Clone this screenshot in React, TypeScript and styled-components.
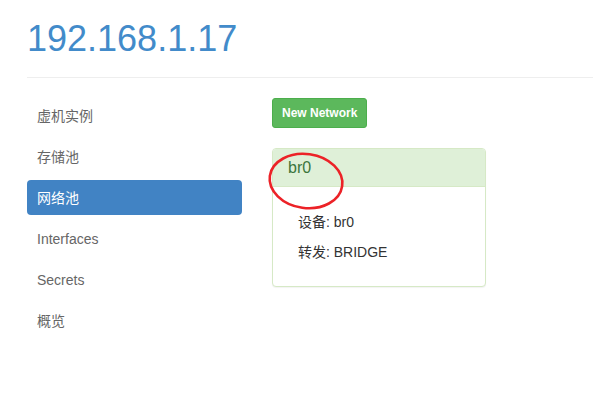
import React from "react";
import styled, { createGlobalStyle } from "styled-components";

type NavItem = {
  label: string;
  active?: boolean;
};

const navItems: NavItem[] = [
  { label: "虚机实例" },
  { label: "存储池" },
  { label: "网络池", active: true },
  { label: "Interfaces" },
  { label: "Secrets" },
  { label: "概览" },
];

const App = () => {
  return (
    <>
      <GlobalStyle />
      <Page>
        <Title>192.168.1.17</Title>
        <Divider />
        <Row>
          <Sidebar>
            {navItems.map((item) => (
              <NavLink key={item.label} active={!!item.active}>
                {item.label}
              </NavLink>
            ))}
          </Sidebar>
          <Main>
            <GreenButton>New Network</GreenButton>
            <Panel>
              <PanelHeading>
                <PanelTitle>br0</PanelTitle>
              </PanelHeading>
              <PanelBody>
                <InfoLine>设备: br0</InfoLine>
                <InfoLine>转发: BRIDGE</InfoLine>
              </PanelBody>
              {/* red annotation ring drawn over the heading */}
              <Marker width="80" height="64" viewBox="0 0 80 64">
                <ellipse
                  cx="40"
                  cy="32"
                  rx="36.5"
                  ry="27"
                  transform="rotate(8 40 32)"
                  fill="none"
                  stroke="#ec2227"
                  strokeWidth="2.6"
                />
              </Marker>
            </Panel>
          </Main>
        </Row>
      </Page>
    </>
  );
};

const GlobalStyle = createGlobalStyle`
  html, body {
    margin: 0;
    padding: 0;
    background: #fff;
    overflow: hidden;
  }
  body {
    font-family: "Liberation Sans", Arial, "Noto Sans CJK SC", sans-serif;
    font-size: 14px;
    color: #333;
  }
`;

const Page = styled.div`
  padding-left: 27px;
`;

const Title = styled.h1`
  margin: 0;
  padding-top: 19px;
  font-size: 36px;
  font-weight: 400;
  line-height: 40px;
  color: #428bca;
`;

const Divider = styled.hr`
  margin: 18px 0 20px;
  border: 0;
  border-top: 1px solid #eee;
`;

const Row = styled.div`
  display: flex;
  gap: 30px;
`;

const Sidebar = styled.ul`
  list-style: none;
  margin: 0;
  padding: 0;
  width: 215px;
  display: flex;
  flex-direction: column;
  gap: 6px;
`;

const NavLink = styled.li<{ active: boolean }>`
  height: 35px;
  line-height: 36px;
  padding: 0 10px;
  border-radius: 4px;
  font-size: 14px;
  color: ${(p) => (p.active ? "#fff" : "#666")};
  background: ${(p) => (p.active ? "#4183c4" : "transparent")};
`;

const Main = styled.div`
  width: 214px;
  display: flex;
  flex-direction: column;
  align-items: flex-start;
  gap: 20px;
`;

const GreenButton = styled.button`
  height: 30px;
  padding: 0 9px;
  border: 1px solid #4cae4c;
  border-radius: 3px;
  background: #5cb85c;
  color: #fff;
  font-family: "Liberation Sans", Arial, sans-serif;
  font-size: 12px;
  font-weight: 700;
`;

const Panel = styled.div`
  position: relative;
  width: 214px;
  box-sizing: border-box;
  border: 1px solid #d6e9c6;
  border-radius: 4px;
  background: #fff;
  box-shadow: 0 1px 1px rgba(0, 0, 0, 0.05);
`;

const PanelHeading = styled.div`
  height: 38px;
  box-sizing: border-box;
  padding: 0 15px;
  background: #dff0d8;
  border-bottom: 1px solid #d6e9c6;
  border-radius: 3px 3px 0 0;
  display: flex;
  align-items: center;
`;

const PanelTitle = styled.h3`
  margin: 1px 0 0;
  font-size: 16px;
  font-weight: 400;
  color: #3c763d;
`;

const PanelBody = styled.div`
  padding: 20px 25px 19px;
`;

const InfoLine = styled.div`
  line-height: 30px;
  font-size: 14px;
  color: #333;
`;

const Marker = styled.svg`
  position: absolute;
  left: -7px;
  top: 0px;
  pointer-events: none;
`;

export default App;
